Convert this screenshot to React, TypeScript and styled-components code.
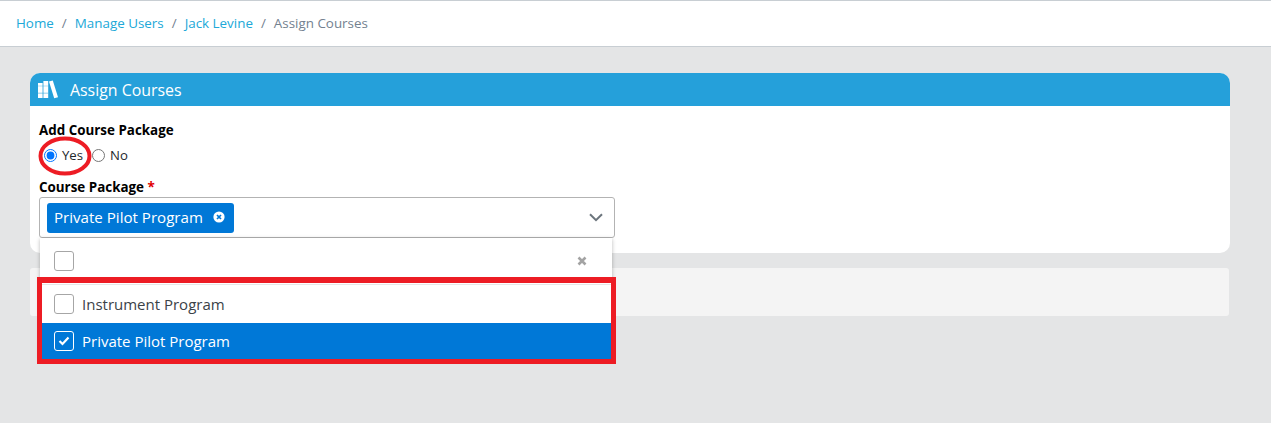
import React from "react";
import styled, { createGlobalStyle } from "styled-components";

const GlobalStyle = createGlobalStyle`
  html, body {
    margin: 0;
    padding: 0;
    background: #e4e5e6;
    font-family: "Open Sans", "Noto Sans", sans-serif;
  }
  * {
    box-sizing: border-box;
  }
`;

const Page = styled.div`
  position: relative;
  width: 1271px;
  height: 423px;
  overflow: hidden;
  background: #e4e5e6;
`;

const Breadcrumb = styled.nav`
  display: flex;
  align-items: center;
  height: 47px;
  padding: 0 16px 1px;
  background: #fff;
  border-top: 1px solid #c8ced3;
  border-bottom: 1px solid #c8ced3;
  font-size: 13.4px;
  color: #73818f;
`;

const Crumb = styled.a`
  color: #20a8d8;
`;

const Slash = styled.span`
  padding: 0 8px;
  color: #73818f;
`;

const Main = styled.main`
  padding: 26px 41px 0 30px;
`;

const Card = styled.section`
  height: 180px;
  background: #fff;
  border-radius: 10px;
`;

const CardHeader = styled.header`
  display: flex;
  align-items: center;
  gap: 10px;
  height: 33px;
  padding: 0 8px;
  background: #25a0da;
  border-radius: 10px 10px 0 0;
  color: #fff;
  font-size: 15.9px;
`;

const CardBody = styled.div`
  padding: 16px 9px 0;
`;

const Label = styled.div`
  height: 17px;
  font-size: 13.4px;
  line-height: 17px;
  font-weight: 700;
  color: #000;
`;

const Required = styled.span`
  color: #e00000;
`;

const RadioRow = styled.div`
  display: flex;
  align-items: center;
  gap: 9px;
  height: 22px;
  margin: 5px 0 13px 5px;
  font-size: 13.2px;
  color: #23282c;
`;

const RadioOption = styled.label`
  display: flex;
  align-items: center;
  gap: 5px;
`;

const Radio = styled.input`
  width: 13px;
  height: 13px;
  margin: 0;
`;

const SelectWrap = styled.div`
  position: relative;
  width: 576px;
  margin-top: 1px;
`;

const Control = styled.div`
  display: flex;
  align-items: center;
  justify-content: space-between;
  height: 41px;
  padding: 0 11px 0 7px;
  border: 1px solid #b3b3b3;
  border-radius: 3px;
  background: #fff;
`;

const Chip = styled.div`
  display: flex;
  align-items: center;
  gap: 10px;
  height: 30px;
  padding: 0 9px 2px 7px;
  background: #0078d7;
  border-radius: 3px;
  color: #fff;
  font-size: 15.1px;
`;

const Dropdown = styled.div`
  position: absolute;
  top: 41px;
  left: 1px;
  width: 572px;
  background: #fff;
  box-shadow: 0 1px 4px rgba(0, 0, 0, 0.28);
  font-size: 15px;
  color: #3b4248;
`;

const FilterRow = styled.div`
  display: flex;
  align-items: center;
  justify-content: space-between;
  height: 47px;
  padding: 0 25px 0 14px;
  border-bottom: 1px solid #e6e6e6;
`;

const Option = styled.div<{ $selected?: boolean }>`
  display: flex;
  align-items: center;
  gap: 8px;
  height: ${(p) => (p.$selected ? "36px" : "38px")};
  padding: 0 14px;
  background: ${(p) => (p.$selected ? "#0078d7" : "#fff")};
  color: ${(p) => (p.$selected ? "#fff" : "#3b4248")};
`;

const Box = styled.span<{ $selected?: boolean }>`
  display: flex;
  align-items: center;
  justify-content: center;
  width: 20px;
  height: 20px;
  border: 1px solid ${(p) => (p.$selected ? "#fff" : "#a6a6a6")};
  border-radius: 3px;
  background: ${(p) => (p.$selected ? "#0078d7" : "#fff")};
`;

const Footer = styled.div`
  height: 48px;
  width: 1199px;
  margin-top: 15px;
  background: #f4f4f4;
  border-radius: 3px;
`;

const RedRect = styled.div`
  position: absolute;
  left: 37px;
  top: 277px;
  width: 579px;
  height: 87px;
  border: 5px solid #ed1c24;
  border-top-width: 6px;
  pointer-events: none;
`;

const RedOval = styled.svg`
  position: absolute;
  left: 38px;
  top: 136px;
  pointer-events: none;
`;

const BooksIcon = () => (
  <svg width="22" height="20" viewBox="0 0 22 20" fill="#fff">
    <path d="M0 3h4.6v15H0zM5.4 1h4.8v17H5.4z" />
    <path d="M11 1.6l3.8-1 5.2 16.6-3.8 1.1z" />
    <path d="M0 12.6h10.2v1.4H0zM0 5.4h10.2v1H0z" fill="#25a0da" opacity="0.35" />
  </svg>
);

const RemoveIcon = () => (
  <svg width="12" height="12" viewBox="0 0 12 12">
    <circle cx="6" cy="6" r="5.6" fill="#fff" />
    <path d="M4 4l4 4M8 4l-4 4" stroke="#0078d7" strokeWidth="1.7" />
  </svg>
);

const Chevron = () => (
  <svg width="14" height="9" viewBox="0 0 14 9" fill="none">
    <path d="M1 1.2l6 6 6-6" stroke="#6c757d" strokeWidth="2" />
  </svg>
);

const ClearIcon = () => (
  <svg width="10" height="10" viewBox="0 0 10 10" fill="none">
    <path d="M1.5 1.5l7 7M8.5 1.5l-7 7" stroke="#a3a3a3" strokeWidth="2.6" />
  </svg>
);

const Tick = () => (
  <svg width="12" height="10" viewBox="0 0 12 10" fill="none">
    <path d="M1.5 5l3 3 6-6.4" stroke="#fff" strokeWidth="2.2" />
  </svg>
);

export default function App() {
  return (
    <Page>
      <GlobalStyle />
      <Breadcrumb>
        <Crumb>Home</Crumb>
        <Slash>/</Slash>
        <Crumb>Manage Users</Crumb>
        <Slash>/</Slash>
        <Crumb>Jack Levine</Crumb>
        <Slash>/</Slash>
        <span>Assign Courses</span>
      </Breadcrumb>
      <Main>
        <Card>
          <CardHeader>
            <BooksIcon />
            Assign Courses
          </CardHeader>
          <CardBody>
            <Label>Add Course Package</Label>
            <RadioRow>
              <RadioOption>
                <Radio type="radio" name="add" defaultChecked />
                Yes
              </RadioOption>
              <RadioOption>
                <Radio type="radio" name="add" />
                No
              </RadioOption>
            </RadioRow>
            <Label>
              Course Package <Required>*</Required>
            </Label>
            <SelectWrap>
              <Control>
                <Chip>
                  Private Pilot Program
                  <RemoveIcon />
                </Chip>
                <Chevron />
              </Control>
              <Dropdown>
                <FilterRow>
                  <Box />
                  <ClearIcon />
                </FilterRow>
                <Option>
                  <Box />
                  Instrument Program
                </Option>
                <Option $selected>
                  <Box $selected>
                    <Tick />
                  </Box>
                  Private Pilot Program
                </Option>
              </Dropdown>
            </SelectWrap>
          </CardBody>
        </Card>
        <Footer />
      </Main>
      <RedRect />
      <RedOval width="54" height="40" viewBox="0 0 54 40" fill="none">
        <ellipse cx="27" cy="20" rx="24.5" ry="17.5" stroke="#ed1c24" strokeWidth="4" />
      </RedOval>
    </Page>
  );
}
